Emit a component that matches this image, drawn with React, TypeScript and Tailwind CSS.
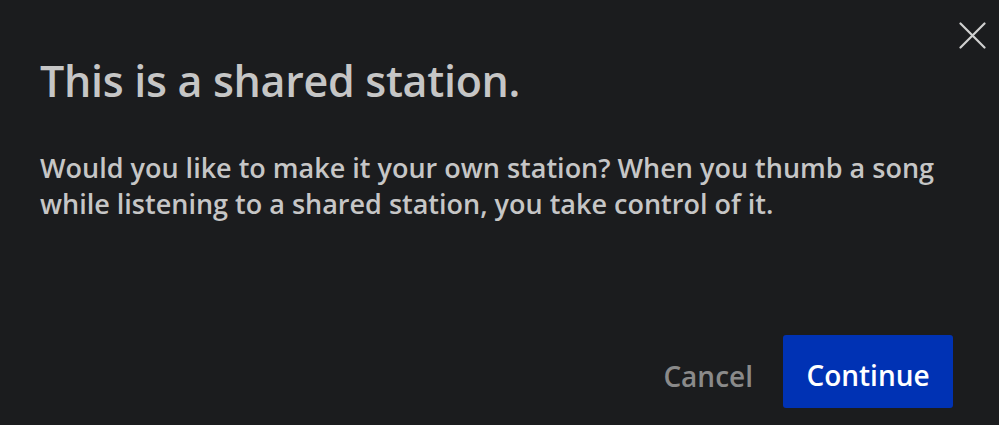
import React from "react";

const App: React.FC = () => {
  return (
    <div
      className="w-[999px] h-[425px] bg-[#1b1c1e] flex flex-col relative overflow-hidden"
      style={{ fontFamily: '"Open Sans", "Noto Sans", sans-serif' }}
    >
      <button className="absolute right-[13px] top-[22px] w-[27px] h-[27px] text-[#d0d0d0]">
        <svg viewBox="0 0 27 27" width="27" height="27" fill="none" stroke="currentColor" strokeWidth="2.2" strokeLinecap="round">
          <path d="M1.5 1.5 L25.5 25.5 M25.5 1.5 L1.5 25.5" />
        </svg>
      </button>

      <div className="px-[40px] pt-[49px]">
        <h1 className="text-[43px] leading-[64px] font-semibold text-[#c6c6c6] tracking-[-0.3px]">
          This is a shared station.
        </h1>
        <p className="mt-[37px] text-[27px] leading-[36px] font-semibold text-[#c6c6c6] w-[910px]">
          Would you like to make it your own station? When you thumb a song while listening to a shared station, you take control of it.
        </p>
      </div>

      <div className="mt-auto mb-[17px] mr-[46px] flex items-center justify-end gap-[30px]">
        <button className="text-[28px] font-semibold text-[#8a8a8a] pt-[8px]">Cancel</button>
        <button className="w-[170px] h-[73px] rounded-[3px] bg-[#0032b4] text-white text-[28px] font-semibold pt-[6px]">
          Continue
        </button>
      </div>
    </div>
  );
};

export default App;
